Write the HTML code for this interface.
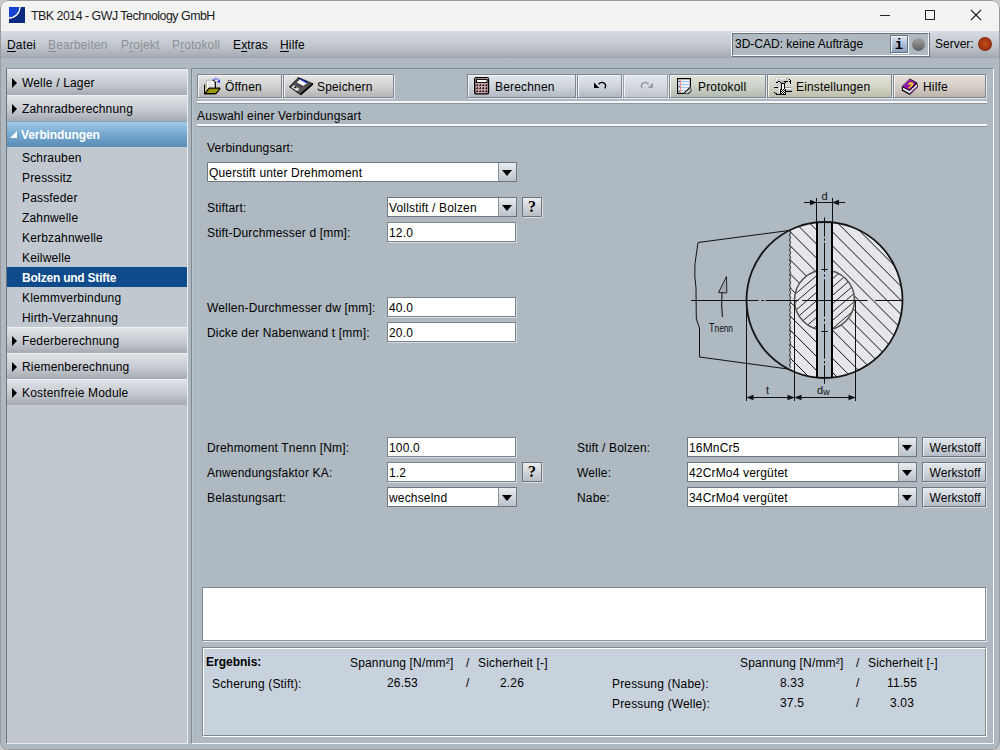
<!DOCTYPE html>
<html><head><meta charset="utf-8">
<style>
*{box-sizing:border-box;margin:0;padding:0}
html,body{width:1000px;height:750px;overflow:hidden;background:#c9c9c9}
body{font-family:"Liberation Sans",sans-serif;font-size:12px;color:#000;position:relative}
.a{position:absolute}
.t{position:absolute;white-space:nowrap;letter-spacing:0.17px;line-height:14px}
#win{position:absolute;left:0;top:0;width:1000px;height:750px;border-radius:8px;overflow:hidden;background:#afb9c1}
#wb{position:absolute;left:0;top:0;width:1000px;height:750px;border-radius:8px;border:1px solid #9a9a9a;pointer-events:none}
#title{position:absolute;left:0;top:0;width:1000px;height:31px;background:#f3f3f3}
#menu{position:absolute;left:0;top:31px;width:1000px;height:27px;background:linear-gradient(#d6dbe1,#c4c9d0 50%,#a5abb3 96%,#9ba1a9)}
.mi{position:absolute;top:38px;font-size:12px;line-height:14px;letter-spacing:0.15px}
.dis{color:#8c8f93}
.ul{text-decoration:underline;text-underline-offset:2px}
#left{position:absolute;left:6px;top:68px;width:182px;height:676px;background:#c1c8cf;border-left:1px solid #6e757d;border-top:1px solid #8e959d;border-bottom:1px solid #e8ecf0;border-right:1px solid #e8ecf0}
.hd{position:absolute;left:0;width:180px;height:26px;background:linear-gradient(#dfe2e6,#c6cad0 55%,#a5aab1);border-top:1px solid #eef0f3}
.hd .tri{position:absolute;left:5px;top:8px;width:0;height:0;border-left:5px solid #000;border-top:5px solid transparent;border-bottom:5px solid transparent}
.hd span{position:absolute;left:15px;top:6px;white-space:nowrap;letter-spacing:0.17px}
.sub{position:absolute;left:15px;white-space:nowrap;letter-spacing:0.17px}
#right{position:absolute;left:191px;top:68px;width:803px;height:676px;border-left:1px solid #7e868f;border-top:1px solid #7e868f;border-right:1px solid #f4f6f8;border-bottom:1px solid #f4f6f8}
#right>.in{position:absolute;left:0;top:0;right:0;bottom:0;border-left:1px solid #bcc4cc;border-top:1px solid #bcc4cc}
.btn{position:absolute;top:74px;height:24px;border:1px solid #7f868e;box-shadow:inset 1px 1px 0 #f3f3f3,1px 1px 0 #e4e8ec;}
.btn .t{top:5px}
.sep{position:absolute;left:197px;width:790px;height:3px;border-top:2px solid #f6f7f8;border-bottom:1px solid #8e959c}
.tf{position:absolute;height:20px;background:#fff;border:1px solid #7d848c;box-shadow:1px 1px 0 #d5dbe1}
.tf .t{left:1px;top:3px}
.cb{position:absolute;height:20px;background:#fff;border:1px solid #6f767e}
.cb .t{left:1px;top:3px}
.cb .ar{position:absolute;right:0;top:0;width:18px;height:18px;background:linear-gradient(#e9ecf0,#bcc2ca);border-left:1px solid #8a9199}
.cb .ar:after{content:"";position:absolute;left:3px;top:7px;border-top:6px solid #000;border-left:5px solid transparent;border-right:5px solid transparent}
.q{position:absolute;width:20px;height:20px;border:1px solid #6f767e;background:linear-gradient(#eceeef,#b9bdc1);box-shadow:1px 1px 0 #d8dde2;font-family:"Liberation Serif",serif;font-weight:bold;font-size:16px;text-align:center;line-height:18px}
.wk{position:absolute;width:64px;height:20px;border:1px solid #6f767e;background:linear-gradient(#e3e7ec,#d0d6dc 50%,#b5bcc5);box-shadow:inset 1px 1px 0 #eef1f4,1px 1px 0 #d8dde2;text-align:center;line-height:20px;padding-left:2px;letter-spacing:0.1px}
</style></head><body>
<div id="win">
<div id="title">
  <svg class="a" style="left:9px;top:7px" width="16" height="16" viewBox="0 0 16 16"><rect width="16" height="16" fill="#0a2a80"/><path d="M0 0H11A11 11 0 0 1 0 11Z" fill="#1642d0"/><path d="M11 0A11 11 0 0 1 0 11" stroke="#fff" stroke-width="1.3" fill="none"/></svg>
  <div class="t" style="left:31px;top:8.5px;font-size:12.4px;letter-spacing:-0.5px;color:#1a1a1a">TBK 2014 - GWJ Technology GmbH</div>
  <div class="a" style="left:880px;top:15px;width:10px;height:1px;background:#222"></div>
  <div class="a" style="left:925px;top:10px;width:10px;height:10px;border:1px solid #222"></div>
  <svg class="a" style="left:970px;top:9px" width="12" height="12" viewBox="0 0 12 12"><path d="M1 1L11 11M11 1L1 11" stroke="#222" stroke-width="1.1"/></svg>
</div>
<div id="menu"></div>
<div class="mi" style="left:7px"><span class="ul">D</span>atei</div>
<div class="mi dis" style="left:48px"><span class="ul">B</span>earbeiten</div>
<div class="mi dis" style="left:121px">P<span class="ul">r</span>ojekt</div>
<div class="mi dis" style="left:172px">P<span class="ul">r</span>otokoll</div>
<div class="mi" style="left:233px">E<span class="ul">x</span>tras</div>
<div class="mi" style="left:280px"><span class="ul">H</span>ilfe</div>

<!-- 3D CAD box -->
<div class="a" style="left:731px;top:32px;width:199px;height:25px;border:1px solid #f8f9fa;border-right-color:#6c737b;border-bottom-color:#6c737b"></div>
<div class="a" style="left:732px;top:33px;width:197px;height:23px;border:1px solid #6c737b;border-right-color:#f8f9fa;border-bottom-color:#f8f9fa;background:#afb9c1"></div>
<div class="t" style="left:735px;top:37px;letter-spacing:0">3D-CAD: keine Aufträge</div>
<div class="a" style="left:890px;top:35px;width:18px;height:18px;background:linear-gradient(#dde5f1,#b0c0d8 50%,#8ca2c2);border:1px solid #6c737b;box-shadow:inset 1px 1px 0 #f2f5f9,1px 1px 0 #f2f5f9;font-family:'Liberation Mono',monospace;font-weight:bold;font-size:14px;line-height:19px;text-align:center">i</div>
<div class="a" style="left:911.5px;top:38.3px;width:13px;height:13px;border-radius:50%;background:linear-gradient(#a2a2a2,#5e5e5e)"></div>
<div class="t" style="left:935px;top:37px;letter-spacing:0">Server:</div>
<div class="a" style="left:978px;top:37px;width:14px;height:14px;border-radius:50%;background:radial-gradient(circle at 50% 48%,#c84a1c,#9e3312 55%,#5e1a08)"></div>

<!-- left panel -->
<div id="left">
  <div class="hd" style="top:0"><div class="tri"></div><span>Welle / Lager</span></div>
  <div class="hd" style="top:26px"><div class="tri"></div><span>Zahnradberechnung</span></div>
  <div class="hd" style="top:52px;background:linear-gradient(#a3cae6,#74a8d0 50%,#5a8cb6);border-top-color:#8aa4bb"><div class="a" style="left:3px;top:9px;border-left:7px solid transparent;border-bottom:7px solid #fff"></div><span style="left:14px;color:#fff;font-weight:bold;letter-spacing:-0.1px">Verbindungen</span></div>
  <div class="sub" style="top:82px">Schrauben</div>
  <div class="sub" style="top:102px">Presssitz</div>
  <div class="sub" style="top:122px">Passfeder</div>
  <div class="sub" style="top:142px">Zahnwelle</div>
  <div class="sub" style="top:162px">Kerbzahnwelle</div>
  <div class="sub" style="top:182px">Keilwelle</div>
  <div class="a" style="left:0;top:198px;width:180px;height:20px;background:#0f4b8a"></div>
  <div class="sub" style="top:202px;color:#fff;font-weight:bold;letter-spacing:-0.22px">Bolzen und Stifte</div>
  <div class="sub" style="top:222px">Klemmverbindung</div>
  <div class="sub" style="top:242px">Hirth-Verzahnung</div>
  <div class="hd" style="top:258px"><div class="tri"></div><span>Federberechnung</span></div>
  <div class="hd" style="top:284px"><div class="tri"></div><span>Riemenberechnung</span></div>
  <div class="hd" style="top:310px"><div class="tri"></div><span>Kostenfreie Module</span></div>
</div>

<!-- right panel -->
<div id="right"><div class="in"></div></div>


<!-- toolbar -->
<div class="btn" style="left:197px;width:85px;background:linear-gradient(#e6e6e6,#d2d2d2 50%,#b4b4b4)">
 <svg class="a" style="left:6px;top:3px" width="17" height="17" viewBox="0 0 17 17">
  <path d="M0.6 6.5 V15.6 H11" fill="none" stroke="#000" stroke-width="1.3"/>
  <rect x="1.3" y="7" width="1.3" height="8" fill="#d6ce58"/>
  <path d="M2.4 10.5 V2.2 H9.2 L11.2 4.2 V10" fill="#fff" stroke="#a0a0a0" stroke-width="0.9"/>
  <path d="M4 4.6H8M4 6.6H9.5M4 8.6H9.5" stroke="#c0c0c0" stroke-width="0.8"/>
  <path d="M9 2 L11.3 4.3 V10.5" fill="none" stroke="#000" stroke-width="1.2"/>
  <rect x="9.6" y="3.2" width="1" height="1" fill="#fff"/>
  <path d="M0.8 15.6 L5.2 10.2 H15.8 V11.2 L12 15.6 Z" fill="#9c9400" stroke="#000" stroke-width="1.2" stroke-linejoin="round"/>
  <path d="M9.2 2.2 Q11.5 -0.6 14.2 1.6" fill="none" stroke="#2a38e8" stroke-width="1.1" stroke-dasharray="1.3 0.5"/>
  <path d="M16 1 V4.6 H12.6Z" fill="#2030e0"/>
 </svg>
 <div class="t" style="left:27px">Öffnen</div>
</div>
<div class="btn" style="left:283px;width:111px;background:linear-gradient(#e6e6e6,#d2d2d2 50%,#b4b4b4)">
 <svg class="a" style="left:5px;top:2px" width="25" height="19" viewBox="0 0 25 19">
  <path d="M0.6 9.8 L9.5 0.6 L23.8 6.8 L11.5 17.6Z" fill="#555"/>
  <path d="M7.9 5.6 L11.7 2.1 L17.8 6.3 L14.3 8.8Z" fill="#fff"/>
  <path d="M11.4 2 L18 5.8" stroke="#2838f0" stroke-width="1.6"/>
  <path d="M2 10.4 L4.9 8.3 L10.6 12 L7.8 14.6Z" fill="#dcdcdc"/>
  <path d="M4.8 10.4 L6.4 9.3 L7.8 10.3 L6.2 11.4Z" fill="#111"/>
  <path d="M6.5 6.2 L13.5 10.3" stroke="#111" stroke-width="0.8" stroke-dasharray="1 1"/>
  <path d="M0.6 9.8 L9.5 0.6 L23.8 6.8 L11.5 17.6Z" fill="none" stroke="#000" stroke-width="1.1" stroke-linejoin="round" stroke-dasharray="1.2 0.5"/>
  <path d="M23.8 6.8 L11.5 17.6" stroke="#000" stroke-width="1.7"/>
 </svg>
 <div class="t" style="left:33px">Speichern</div>
</div>
<div class="btn" style="left:467px;width:109px;background:linear-gradient(#e2e6ec,#cfd5dc 50%,#b2b9c2)">
 <svg class="a" style="left:6px;top:2px" width="16" height="18" viewBox="0 0 16 18">
  <rect x="0.7" y="0.7" width="13.8" height="16.2" rx="1.5" fill="#caa2a6" stroke="#000" stroke-width="1.4"/>
  <rect x="1.5" y="1.5" width="12.8" height="1" fill="#e8d0d2"/>
  <rect x="2.5" y="2.5" width="10.5" height="3" fill="#f8f8f8" stroke="#111" stroke-width="1"/>
  <g fill="#000"><rect x="2.2" y="7.2" width="1.7" height="1.7"/><rect x="5.2" y="7.2" width="1.7" height="1.7"/><rect x="8.2" y="7.2" width="1.7" height="1.7"/><rect x="11.2" y="7.2" width="1.7" height="1.7"/><rect x="2.2" y="10.2" width="1.7" height="1.7"/><rect x="5.2" y="10.2" width="1.7" height="1.7"/><rect x="8.2" y="10.2" width="1.7" height="1.7"/><rect x="11.2" y="10.2" width="1.7" height="1.7"/><rect x="2.2" y="13.2" width="1.7" height="1.7"/><rect x="5.2" y="13.2" width="1.7" height="1.7"/><rect x="8.2" y="13.2" width="1.7" height="1.7"/><rect x="11.2" y="13.2" width="1.7" height="1.7"/></g><g fill="#f4e4e6"><rect x="2" y="7" width="0.8" height="0.8"/><rect x="5" y="7" width="0.8" height="0.8"/><rect x="8" y="7" width="0.8" height="0.8"/><rect x="11" y="7" width="0.8" height="0.8"/><rect x="2" y="10" width="0.8" height="0.8"/><rect x="5" y="10" width="0.8" height="0.8"/><rect x="8" y="10" width="0.8" height="0.8"/><rect x="11" y="10" width="0.8" height="0.8"/><rect x="2" y="13" width="0.8" height="0.8"/><rect x="5" y="13" width="0.8" height="0.8"/><rect x="8" y="13" width="0.8" height="0.8"/><rect x="11" y="13" width="0.8" height="0.8"/></g>
 </svg>
 <div class="t" style="left:27px">Berechnen</div>
</div>
<div class="btn" style="left:577px;width:45px;background:linear-gradient(#e2e6ec,#cfd5dc 50%,#b2b9c2)">
 <svg class="a" style="left:14px;top:4px" width="16" height="12" viewBox="0 0 16 12">
  <path d="M6.5 5.2 Q8.5 3 11 3.6 Q14 4.6 13.6 7.2 Q13.4 8.4 12.8 9.4" fill="none" stroke="#000" stroke-width="1.3"/>
  <path d="M2 3.6 L2 9 L7.4 9Z" fill="#000"/>
 </svg>
</div>
<div class="btn" style="left:623px;width:45px;background:linear-gradient(#e2e6ec,#d5dae0 50%,#bfc5cd);border-color:#9aa1a9">
 <svg class="a" style="left:15px;top:4px" width="16" height="12" viewBox="0 0 16 12">
  <path d="M9.5 5.2 Q7.5 3 5 3.6 Q2 4.6 2.4 7.2 Q2.6 8.4 3.2 9.4" fill="none" stroke="#8e9296" stroke-width="1.3"/>
  <path d="M14 3.6 L14 9 L8.6 9Z" fill="#9a9ea2"/>
 </svg>
</div>
<div class="btn" style="left:669px;width:97px;background:linear-gradient(#dfe3dc,#cdd3c9 50%,#b3bbb0)">
 <svg class="a" style="left:7px;top:3px" width="16" height="17" viewBox="0 0 16 17">
  <path d="M0.6 0.6 H13.4 V9.2 L7 15.4 H0.6Z" fill="#f6f2f0" stroke="#000" stroke-width="1.2"/>
  <path d="M1.3 3.6H12.8M1.3 6.6H12.8M1.3 9.6H12.5M1.3 12.6H9.5" stroke="#90c4ec" stroke-width="1"/>
  <path d="M3.6 1.3V14.8" stroke="#f48888" stroke-width="1"/>
  <circle cx="2.3" cy="3.2" r="0.55" fill="#000"/><circle cx="2.3" cy="8.2" r="0.55" fill="#000"/><circle cx="2.3" cy="13.2" r="0.55" fill="#000"/>
  <path d="M7 15.4 L13.4 9.2 L14.2 10.2 V13.2 L11.5 15.8 H8Z" fill="#cacaca"/>
  <path d="M7 15.4 L13.4 9.2 M14 10.4 V13.3 L11.2 15.8 H8" fill="none" stroke="#000" stroke-width="1.1" stroke-dasharray="1.2 0.6"/>
 </svg>
 <div class="t" style="left:28px">Protokoll</div>
</div>
<div class="btn" style="left:767px;width:125px;background:linear-gradient(#e3e3d8,#d5d5c8 50%,#bfbfae)">
 <svg class="a" style="left:4px;top:1px" width="20" height="20" viewBox="0 0 20 20" shape-rendering="crispEdges"><path fill="#000" d="M17 3h1v1h-1zM18 4h1v1h-1zM6 5h2v1h-2zM12 5h4v1h-4zM17 5h2v1h-2zM4 6h2v1h-2zM8 6h1v1h-1zM13 6h1v1h-1zM18 6h1v1h-1zM9 7h4v1h-4zM18 7h1v1h-1zM9 8h1v1h-1zM12 8h1v1h-1zM9 9h1v1h-1zM12 9h1v1h-1zM9 10h1v1h-1zM12 10h1v1h-1zM2 11h4v1h-4zM9 11h1v1h-1zM12 11h1v1h-1zM9 12h1v1h-1zM12 12h1v1h-1zM8 13h2v1h-2zM11 13h1v1h-1zM13 13h1v1h-1zM8 14h1v1h-1zM10 14h1v1h-1zM12 14h2v1h-2zM8 15h2v1h-2zM11 15h1v1h-1zM13 15h7v1h-7zM2 16h1v1h-1zM8 16h1v1h-1zM10 16h1v1h-1zM12 16h2v1h-2zM3 17h2v1h-2zM8 17h2v1h-2zM11 17h1v1h-1zM13 17h1v1h-1zM4 18h10v1h-10z"/><path fill="#fff" d="M4 2h2v1h-2zM8 2h6v1h-6zM4 3h1v1h-1zM4 4h1v1h-1zM17 4h1v1h-1zM10 8h2v1h-2zM10 9h2v1h-2zM2 10h2v1h-2zM10 10h2v1h-2zM10 11h2v1h-2zM7 12h1v1h-1zM10 12h2v1h-2zM13 12h6v1h-6zM7 13h1v1h-1zM10 13h1v1h-1zM12 13h1v1h-1zM7 14h1v1h-1zM9 14h1v1h-1zM11 14h1v1h-1zM7 15h1v1h-1zM10 15h1v1h-1zM12 15h1v1h-1zM9 16h1v1h-1zM11 16h1v1h-1zM10 17h1v1h-1zM12 17h1v1h-1z"/><path fill="#cdcdcd" d="M4 1h2v1h-2zM8 1h6v1h-6zM3 2h1v1h-1zM6 2h2v1h-2zM3 3h1v1h-1zM5 3h12v1h-12zM3 4h1v1h-1zM5 4h12v1h-12zM4 5h1v1h-1zM8 5h1v1h-1zM16 5h1v1h-1zM5 8h3v1h-3zM3 9h5v1h-5zM4 10h4v1h-4zM6 11h2v1h-2zM6 12h1v1h-1zM6 13h1v1h-1zM14 13h6v1h-6zM6 14h1v1h-1zM1 15h6v1h-6zM3 16h5v1h-5zM5 17h3v1h-3z"/><path fill="#acacac" d="M14 2h3v1h-3zM9 5h3v1h-3zM9 6h4v1h-4zM14 14h6v1h-6z"/><path fill="#9a9a9a" d="M5 5h1v1h-1zM13 11h6v1h-6z"/></svg>
 <div class="t" style="left:28px">Einstellungen</div>
</div>
<div class="btn" style="left:893px;width:93px;background:linear-gradient(#e6e0da,#d6cfc8 50%,#bdb3ab)">
 <svg class="a" style="left:6px;top:2px" width="20" height="20" viewBox="0 0 20 20">
  <path d="M1.8 9.2 L9.8 1.6 L17 5.6 L18.2 9.8 L9.8 18 L1.9 13.8Z" fill="#000"/>
  <path d="M2.8 10.4 L9.6 14 L17 7 L17.3 9.6 L9.8 16.6 L2.9 12.8Z" fill="#e6e6e6"/>
  <path d="M9.8 16.6 L17.3 9.6" stroke="#9010a8" stroke-width="1"/>
  <path d="M2.2 9.2 L9.8 2.3 L16.4 6 L9.4 13.1Z" fill="#9414aa"/>
  <path d="M2.6 9 L9.6 2.6" stroke="#d8b8e8" stroke-width="0.9" stroke-dasharray="0.9 0.9"/>
  <path d="M8.6 7.6 Q9.6 5.6 11.8 6.2 Q13.6 7 11.4 8.6 L10.3 9.6" fill="none" stroke="#f2e41a" stroke-width="1.7"/>
  <rect x="8.6" y="9.8" width="1.8" height="1.6" fill="#f2e41a"/>
 </svg>
 <div class="t" style="left:29px">Hilfe</div>
</div>
<div class="sep" style="top:101px"></div>
<div class="t" style="left:197px;top:109px">Auswahl einer Verbindungsart</div>
<div class="sep" style="top:124px"></div>

<!-- form -->
<div class="t" style="left:207px;top:141px">Verbindungsart:</div>
<div class="cb" style="left:207px;top:162px;width:310px"><div class="t">Querstift unter Drehmoment</div><div class="ar"></div></div>
<div class="t" style="left:207px;top:201px">Stiftart:</div>
<div class="cb" style="left:387px;top:197px;width:130px"><div class="t">Vollstift / Bolzen</div><div class="ar"></div></div>
<div class="q" style="left:522px;top:197px">?</div>
<div class="t" style="left:207px;top:226px">Stift-Durchmesser d [mm]:</div>
<div class="tf" style="left:387px;top:222px;width:129px"><div class="t">12.0</div></div>
<div class="t" style="left:207px;top:301px">Wellen-Durchmesser dw [mm]:</div>
<div class="tf" style="left:387px;top:297px;width:129px"><div class="t">40.0</div></div>
<div class="t" style="left:207px;top:326px">Dicke der Nabenwand t [mm]:</div>
<div class="tf" style="left:387px;top:322px;width:129px"><div class="t">20.0</div></div>

<div class="t" style="left:207px;top:441px">Drehmoment Tnenn [Nm]:</div>
<div class="tf" style="left:387px;top:437px;width:129px"><div class="t">100.0</div></div>
<div class="t" style="left:207px;top:466px">Anwendungsfaktor KA:</div>
<div class="tf" style="left:387px;top:462px;width:129px"><div class="t">1.2</div></div>
<div class="q" style="left:522px;top:462px">?</div>
<div class="t" style="left:207px;top:491px">Belastungsart:</div>
<div class="cb" style="left:387px;top:487px;width:130px"><div class="t">wechselnd</div><div class="ar"></div></div>

<div class="t" style="left:577px;top:441px">Stift / Bolzen:</div>
<div class="cb" style="left:687px;top:437px;width:230px"><div class="t">16MnCr5</div><div class="ar"></div></div>
<div class="wk" style="left:922px;top:437px">Werkstoff</div>
<div class="t" style="left:577px;top:466px">Welle:</div>
<div class="cb" style="left:687px;top:462px;width:230px"><div class="t">42CrMo4 vergütet</div><div class="ar"></div></div>
<div class="wk" style="left:922px;top:462px">Werkstoff</div>
<div class="t" style="left:577px;top:491px">Nabe:</div>
<div class="cb" style="left:687px;top:487px;width:230px"><div class="t">34CrMo4 vergütet</div><div class="ar"></div></div>
<div class="wk" style="left:922px;top:487px">Werkstoff</div>

<!-- message box -->
<div class="a" style="left:202px;top:587px;width:785px;height:55px;background:#fff;border:1px solid #7f868e;border-right-color:#e6eaee;border-bottom-color:#e6eaee;box-shadow:inset -1px -1px 0 #8a9199"></div>
<!-- results -->
<div class="a" style="left:202px;top:647px;width:785px;height:90px;border:1px solid #80878f;border-right-color:#fff;border-bottom-color:#fff"></div>
<div class="a" style="left:203px;top:648px;width:783px;height:88px;border:1px solid #fff;border-right-color:#80878f;border-bottom-color:#80878f;background:#c8d2dc"></div>
<div class="t" style="left:206px;top:655px;font-weight:bold;letter-spacing:0">Ergebnis:</div>
<div class="t" style="left:350px;top:656px">Spannung [N/mm²]</div>
<div class="t" style="left:466px;top:656px">/</div>
<div class="t" style="left:478px;top:656px">Sicherheit [-]</div>
<div class="t" style="left:212px;top:677px">Scherung (Stift):</div>
<div class="t" style="left:387px;top:676px">26.53</div>
<div class="t" style="left:466px;top:676px">/</div>
<div class="t" style="left:500px;top:676px">2.26</div>
<div class="t" style="left:740px;top:656px">Spannung [N/mm²]</div>
<div class="t" style="left:856px;top:656px">/</div>
<div class="t" style="left:868px;top:656px">Sicherheit [-]</div>
<div class="t" style="left:612px;top:677px">Pressung (Nabe):</div>
<div class="t" style="left:780px;top:676px">8.33</div>
<div class="t" style="left:856px;top:676px">/</div>
<div class="t" style="left:887px;top:676px">11.55</div>
<div class="t" style="left:612px;top:697px">Pressung (Welle):</div>
<div class="t" style="left:780px;top:696px">37.5</div>
<div class="t" style="left:856px;top:696px">/</div>
<div class="t" style="left:890px;top:696px">3.03</div>
<!--DIAG--><svg class="a" style="left:680px;top:185px" width="240" height="225" viewBox="0 0 240 225">
<defs>
<clipPath id="hubc"><path clip-rule="evenodd" d="M110.00,45.04 A78.0,78.0 0 1 1 110.00,184.96 Z M114.50,115.00 A30.0,30.0 0 1 0 174.50,115.00 A30.0,30.0 0 1 0 114.50,115.00 Z"/></clipPath>
<clipPath id="shc"><path d="M114.50,115.00 A30.0,30.0 0 1 0 174.50,115.00 A30.0,30.0 0 1 0 114.50,115.00 Z"/></clipPath>
</defs>
<path fill-rule="evenodd" d="M110.00,45.04 A78.0,78.0 0 1 1 110.00,184.96 Z M114.50,115.00 A30.0,30.0 0 1 0 174.50,115.00 A30.0,30.0 0 1 0 114.50,115.00 Z" fill="#e5e7ea"/>
<path d="M114.50,115.00 A30.0,30.0 0 1 0 174.50,115.00 A30.0,30.0 0 1 0 114.50,115.00 Z" fill="#e5e7ea"/>
<path clip-path="url(#hubc)" d="M60.00,-326.60L230.00,-156.60M60.00,-312.55L230.00,-142.55M60.00,-298.50L230.00,-128.50M60.00,-284.45L230.00,-114.45M60.00,-270.40L230.00,-100.40M60.00,-256.35L230.00,-86.35M60.00,-242.30L230.00,-72.30M60.00,-228.25L230.00,-58.25M60.00,-214.20L230.00,-44.20M60.00,-200.15L230.00,-30.15M60.00,-186.10L230.00,-16.10M60.00,-172.05L230.00,-2.05M60.00,-158.00L230.00,12.00M60.00,-143.95L230.00,26.05M60.00,-129.90L230.00,40.10M60.00,-115.85L230.00,54.15M60.00,-101.80L230.00,68.20M60.00,-87.75L230.00,82.25M60.00,-73.70L230.00,96.30M60.00,-59.65L230.00,110.35M60.00,-45.60L230.00,124.40M60.00,-31.55L230.00,138.45M60.00,-17.50L230.00,152.50M60.00,-3.45L230.00,166.55M60.00,10.60L230.00,180.60M60.00,24.65L230.00,194.65M60.00,38.70L230.00,208.70M60.00,52.75L230.00,222.75M60.00,66.80L230.00,236.80M60.00,80.85L230.00,250.85M60.00,94.90L230.00,264.90M60.00,108.95L230.00,278.95M60.00,123.00L230.00,293.00M60.00,137.05L230.00,307.05M60.00,151.10L230.00,321.10M60.00,165.15L230.00,335.15M60.00,179.20L230.00,349.20M60.00,193.25L230.00,363.25M60.00,207.30L230.00,377.30M60.00,221.35L230.00,391.35" stroke="#111" stroke-width="1" fill="none"/>
<path clip-path="url(#shc)" d="M100.00,-44.44L190.00,-121.84M100.00,-36.11L190.00,-113.51M100.00,-27.78L190.00,-105.18M100.00,-19.45L190.00,-96.85M100.00,-11.12L190.00,-88.52M100.00,-2.79L190.00,-80.19M100.00,5.54L190.00,-71.86M100.00,13.87L190.00,-63.53M100.00,22.20L190.00,-55.20M100.00,30.53L190.00,-46.87M100.00,38.86L190.00,-38.54M100.00,47.19L190.00,-30.21M100.00,55.52L190.00,-21.88M100.00,63.85L190.00,-13.55M100.00,72.18L190.00,-5.22M100.00,80.51L190.00,3.11M100.00,88.84L190.00,11.44M100.00,97.17L190.00,19.77M100.00,105.50L190.00,28.10M100.00,113.83L190.00,36.43M100.00,122.16L190.00,44.76M100.00,130.49L190.00,53.09M100.00,138.82L190.00,61.42M100.00,147.15L190.00,69.75M100.00,155.48L190.00,78.08M100.00,163.81L190.00,86.41M100.00,172.14L190.00,94.74M100.00,180.47L190.00,103.07M100.00,188.80L190.00,111.40M100.00,197.13L190.00,119.73M100.00,205.46L190.00,128.06M100.00,213.79L190.00,136.39M100.00,222.12L190.00,144.72M100.00,230.45L190.00,153.05M100.00,238.78L190.00,161.38M100.00,247.11L190.00,169.71M100.00,255.44L190.00,178.04M100.00,263.77L190.00,186.37M100.00,272.10L190.00,194.70M100.00,280.43L190.00,203.03" stroke="#111" stroke-width="0.9" fill="none"/>
<circle cx="144.5" cy="115.0" r="30.0" fill="none" stroke="#555" stroke-width="1.5"/>
<rect x="137" y="35.0" width="15" height="160.0" fill="#b3bdc7" clip-path="url(#bigc)"/>
<clipPath id="bigc"><circle cx="144.5" cy="115.0" r="78.0"/></clipPath>
<circle cx="144.5" cy="115.0" r="78.0" fill="none" stroke="#141414" stroke-width="1.8"/>
<path d="M137.00,37.00V193.0M152.00,37.00V193.0" stroke="#000" stroke-width="2"/>
<path d="M110.00,45.04L109.60,45.04L110.60,47.54L109.60,50.04L110.60,52.54L109.60,55.04L110.60,57.54L109.60,60.04L110.60,62.54L109.60,65.04L110.60,67.54L109.60,70.04L110.60,72.54L109.60,75.04L110.60,77.54L109.60,80.04L110.60,82.54L109.60,85.04L110.60,87.54L109.60,90.04L110.60,92.54L109.60,95.04L110.60,97.54L109.60,100.04L110.60,102.54L109.60,105.04L110.60,107.54L109.60,110.04L110.60,112.54L109.60,115.04L110.60,117.54L109.60,120.04L110.60,122.54L109.60,125.04L110.60,127.54L109.60,130.04L110.60,132.54L109.60,135.04L110.60,137.54L109.60,140.04L110.60,142.54L109.60,145.04L110.60,147.54L109.60,150.04L110.60,152.54L109.60,155.04L110.60,157.54L109.60,160.04L110.60,162.54L109.60,165.04L110.60,167.54L109.60,170.04L110.60,172.54L109.60,175.04L110.60,177.54L109.60,180.04L110.60,182.54" fill="none" stroke="#1a1a1a" stroke-width="1"/>
<path d="M11.00,115.50H78.70000000000005M81.30,115.50H83.79999999999995M85.50,115.50H118.5M122.20,115.50H187.70000000000005M195.00,115.50H222" stroke="#111" stroke-width="1"/>
<path d="M144.50,32.40V51.599999999999994M144.50,53.40V55.80000000000001M144.50,57.60V87M144.50,89.40V91.80000000000001M144.50,94.20V131.60000000000002M144.50,134.00V136.39999999999998M144.50,138.80V173.60000000000002M144.50,176.00V178.39999999999998M144.50,180.20V198.8" stroke="#111" stroke-width="1"/>
<path d="M141.30,84.50H147.79999999999995M141.30,146.50H147.79999999999995" stroke="#111" stroke-width="1"/>
<path d="M109.00,45.50L18.00,57.50L15.00,78.50L14.80,91.00L16.00,103.00L16.30,134.00L19.50,143.00L19.50,172.00L108.00,184.00" fill="none" stroke="#111" stroke-width="1"/>
<path d="M42.50,132.00Q41.00,120.00 42.00,107.00" fill="none" stroke="#222" stroke-width="1.2"/>
<path d="M38.50,107.50L46.50,91.50L46.80,108.00Z" fill="#a4a8ac" stroke="#222" stroke-width="1"/>
<path d="M66.50,115.00V216M114.50,115.00V216M175.50,115.00V216M136.50,13.00V37M152.50,13.00V37" stroke="#111" stroke-width="1"/>
<path d="M66.50,212.50H175.5M124.00,17.50H165" stroke="#111" stroke-width="1"/>
<path d="M66.50,212.50L73.50,209.70L73.50,215.30ZM114.50,212.50L107.50,209.70L107.50,215.30ZM114.50,212.50L121.50,209.70L121.50,215.30ZM175.50,212.50L168.50,209.70L168.50,215.30ZM137.00,17.50L130.00,14.70L130.00,20.30ZM152.00,17.50L159.00,14.70L159.00,20.30Z" fill="#111"/>
<text x="29" y="146.5" font-family="Liberation Sans" font-size="12" fill="#111" textLength="24" lengthAdjust="spacingAndGlyphs">T<tspan font-size="11">nenn</tspan></text>
<text x="141.5" y="14.5" font-family="Liberation Sans" font-size="11" fill="#111">d</text>
<text x="86" y="209" font-family="Liberation Sans" font-size="11" fill="#111">t</text>
<text x="137" y="208.5" font-family="Liberation Sans" font-size="11" fill="#111">d<tspan font-size="9" dy="1">w</tspan></text>
</svg><!--/DIAG-->
<div id="wb"></div>
</div>
</body></html>
